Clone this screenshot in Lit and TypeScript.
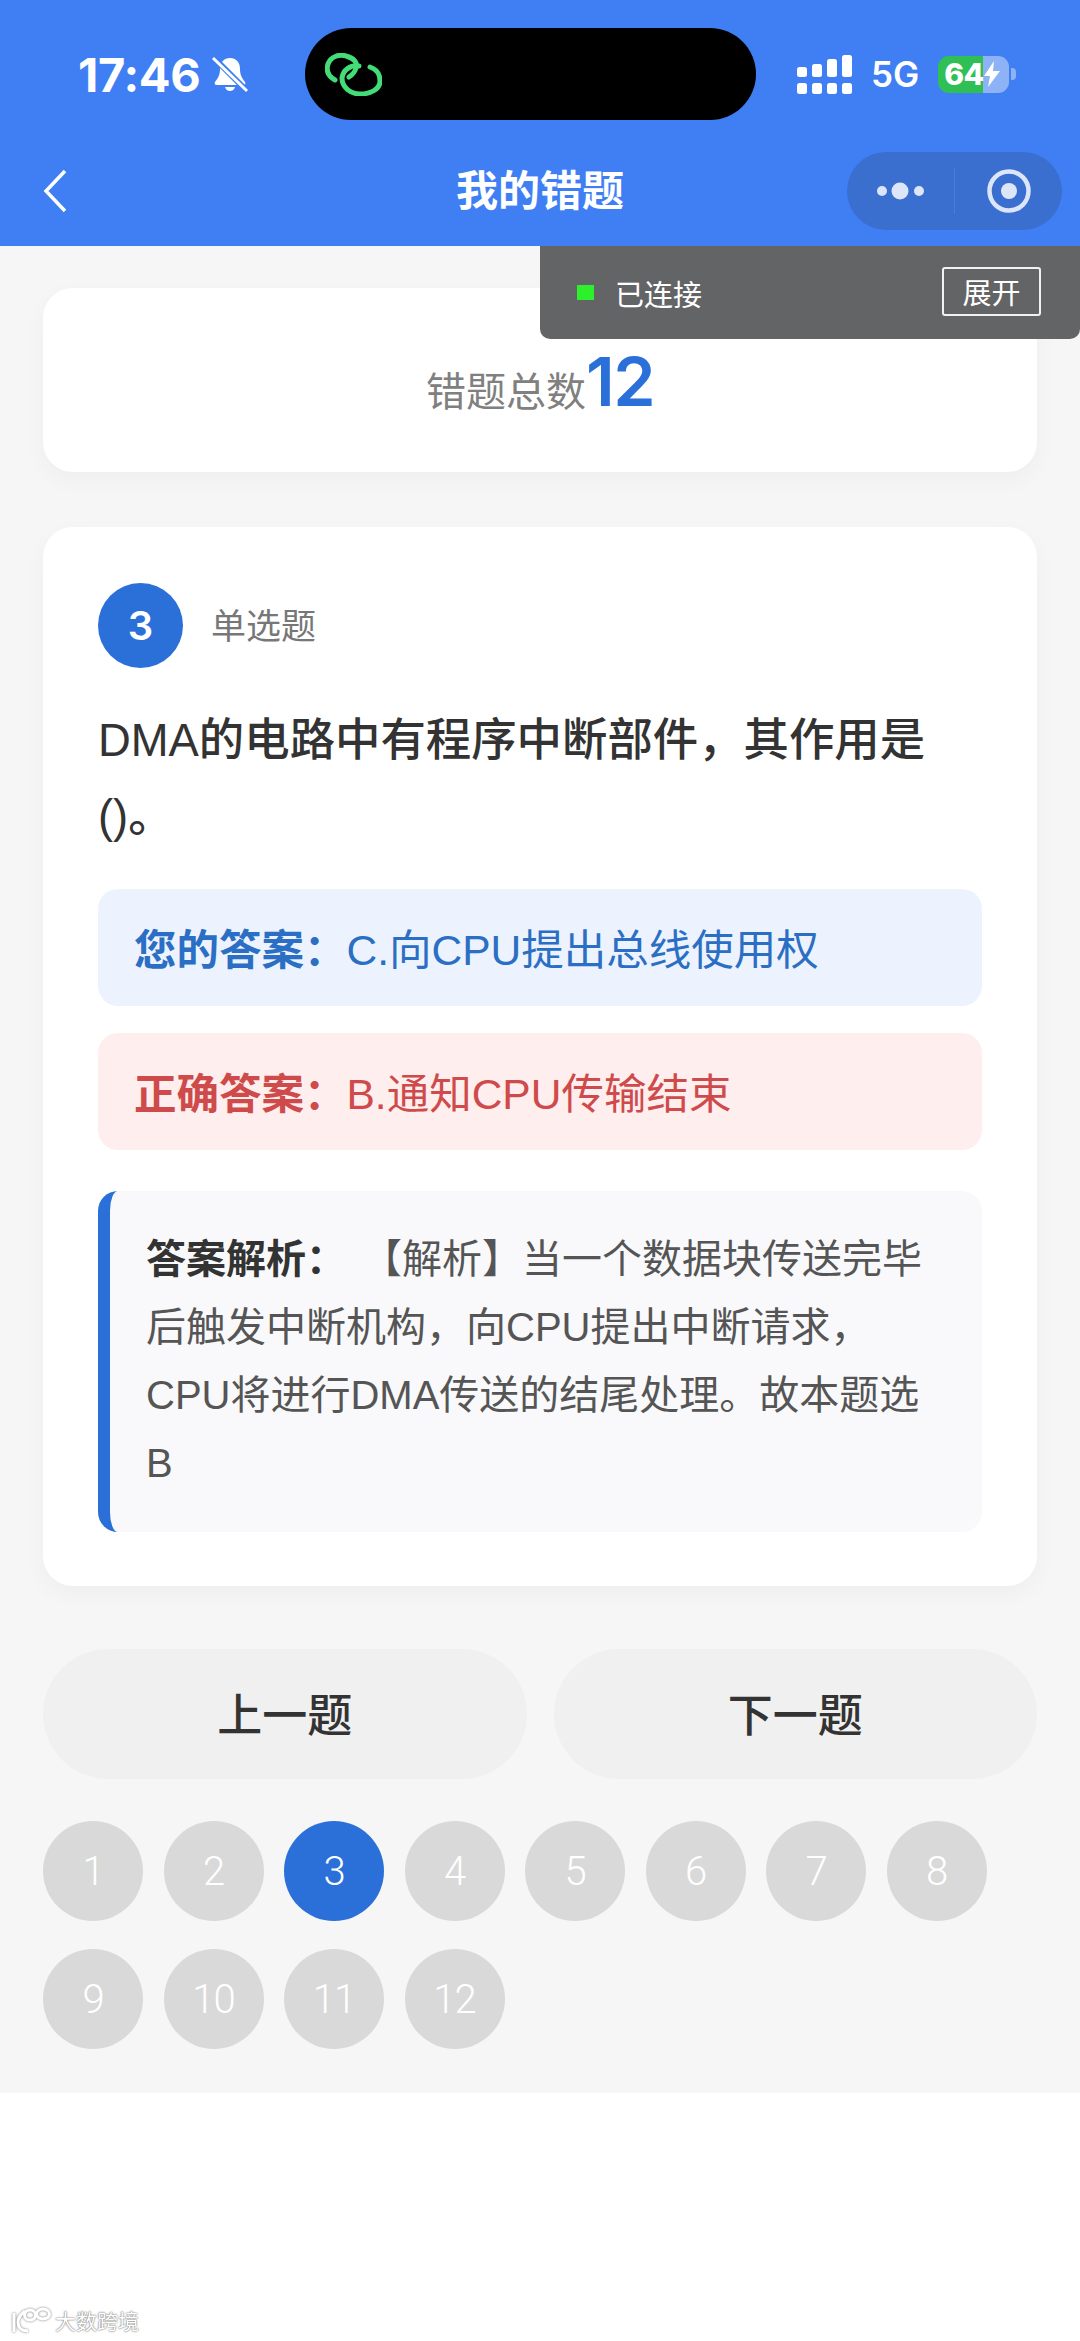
import { html, css, LitElement } from 'lit';
import { customElement, state } from 'lit/decorators.js';

@customElement('app-root')
export class AppRoot extends LitElement {
  static styles = css`
    :host {
      display: block;
      width: 1080px;
      height: 2341px;
      background: #fff;
      font-family: "Liberation Sans", "Noto Sans CJK SC", sans-serif;
      color: #333;
      position: relative;
      overflow: hidden;
    }

    .header {
      height: 246px;
      box-sizing: border-box;
      background: #3f7ff3;
      padding-top: 28px;
      color: #fff;
    }

    .status {
      display: grid;
      grid-template-columns: 305px 451px 1fr;
      height: 92px;
      align-items: center;
    }

    .status-left {
      display: flex;
      align-items: center;
      gap: 10px;
      padding-left: 78px;
    }

    .time {
      font-family: Inter, sans-serif;
      font-size: 47px;
      font-weight: 700;
      letter-spacing: -0.3px;
      line-height: 1;
    }

    .island {
      height: 92px;
      border-radius: 46px;
      background: #000;
      display: flex;
      align-items: center;
      padding-left: 20px;
    }

    .status-right {
      display: flex;
      align-items: center;
      padding-left: 41px;
    }

    .net {
      font-family: Inter, sans-serif;
      font-size: 35px;
      font-weight: 600;
      margin: 0 19px;
      line-height: 1;
    }

    .battery {
      width: 71px;
      height: 37px;
      border-radius: 11px;
      background: linear-gradient(90deg, #2fbf55 0 45px, #8db2f5 45px);
      display: flex;
      align-items: center;
      padding-left: 6px;
      box-sizing: border-box;
      font-family: Inter, sans-serif;
      font-size: 30px;
      font-weight: 800;
      line-height: 1;
      letter-spacing: -0.5px;
    }

    .battery-nub {
      width: 5px;
      height: 12px;
      border-radius: 0 4px 4px 0;
      background: #8db2f5;
      margin-left: 2px;
    }

    .nav {
      display: grid;
      grid-template-columns: 1fr auto 1fr;
      align-items: center;
      margin-top: 32px;
      height: 78px;
    }

    .back {
      padding-left: 43px;
      display: flex;
    }

    .title {
      font-size: 42px;
      font-weight: 700;
      line-height: 1;
      padding-top: 2px;
    }

    .capsule {
      justify-self: end;
      margin-right: 18px;
      width: 215px;
      height: 78px;
      border-radius: 39px;
      background: #3a6fd0;
      display: grid;
      grid-template-columns: 107px 1px 1fr;
      align-items: center;
      justify-items: center;
    }

    .capsule-line {
      width: 1px;
      height: 46px;
      background: #4a7cd8;
    }

    .panel {
      position: absolute;
      top: 246px;
      right: 0;
      width: 540px;
      height: 93px;
      box-sizing: border-box;
      background: #636466;
      border-radius: 0 0 10px 10px;
      display: flex;
      align-items: center;
      padding: 0 39px 0 37px;
      color: #fff;
      font-size: 29px;
      z-index: 2;
    }

    .panel-dot {
      width: 17px;
      height: 15px;
      background: #2cf02c;
      margin-right: 21px;
    }

    .panel-btn {
      margin-left: auto;
      width: 99px;
      height: 49px;
      box-sizing: border-box;
      border: 2px solid #f2f2f2;
      border-radius: 3px;
      display: flex;
      align-items: center;
      justify-content: center;
      font-size: 29px;
      margin-top: -3px;
    }

    .main {
      height: 1847px;
      box-sizing: border-box;
      background: #f6f6f6;
      padding: 42px 43px 0;
    }

    .card {
      background: #fff;
      border-radius: 30px;
      box-shadow: 0 8px 24px rgba(0, 0, 0, 0.035);
    }

    .total {
      height: 184px;
      display: flex;
      align-items: baseline;
      justify-content: center;
      line-height: 186px;
      font-size: 40px;
      color: #808080;
    }

    .total b {
      font-family: Inter, "Liberation Sans", sans-serif;
      font-size: 68px;
      font-weight: 600;
      color: #2b6fd8;
      letter-spacing: -1.5px;
    }

    .question {
      margin-top: 55px;
      padding: 56px 55px 54px;
    }

    .q-head {
      display: flex;
      align-items: center;
      gap: 28px;
      font-size: 35px;
      color: #777;
    }

    .q-head span {
      padding-bottom: 4px;
    }

    .badge {
      width: 85px;
      height: 85px;
      border-radius: 50%;
      background: #2b6fd8;
      color: #fff;
      display: flex;
      align-items: center;
      justify-content: center;
      font-family: Inter, sans-serif;
      font-size: 40px;
      font-weight: 600;
    }

    .q-text {
      margin-top: 35px;
      font-size: 45.4px;
      font-weight: 500;
      line-height: 76px;
      color: #333;
    }

    .answer {
      height: 117px;
      box-sizing: border-box;
      border-radius: 20px;
      display: flex;
      align-items: center;
      padding: 0 0 2px 36px;
      font-size: 42.5px;
    }

    .answer b {
      font-weight: 700;
    }

    .mine {
      margin-top: 34px;
      background: #edf3fe;
      color: #2b6fc4;
    }

    .right {
      margin-top: 27px;
      background: #feeeee;
      color: #cf4a4a;
    }

    .analysis {
      margin-top: 41px;
      border-left: 12px solid #2b6fd8;
      border-radius: 20px;
      background: #f9f9fb;
      padding: 34px 36px 35px;
      font-size: 40px;
      line-height: 68px;
      color: #555;
    }

    .analysis b {
      color: #333;
      font-weight: 700;
      margin-right: 36px;
    }

    .btns {
      display: grid;
      grid-template-columns: 1fr 1fr;
      gap: 27px;
      margin-top: 63px;
    }

    .btn {
      height: 130px;
      box-sizing: border-box;
      border-radius: 65px;
      background: #f0f0f0;
      display: flex;
      align-items: center;
      justify-content: center;
      padding-bottom: 4px;
      font-size: 45px;
      font-weight: 500;
      color: #333;
    }

    .pager {
      display: flex;
      flex-wrap: wrap;
      gap: 28px 20.5px;
      margin-top: 42px;
    }

    .page {
      width: 100px;
      height: 100px;
      border-radius: 50%;
      background: #d9d9d9;
      color: #fff;
      display: flex;
      align-items: center;
      justify-content: center;
      font-family: Roboto, sans-serif;
      font-size: 40px;
      font-weight: 300;
      letter-spacing: -1px;
    }

    .page.on {
      background: #2b6fd8;
    }

    .mark {
      position: absolute;
      left: 10px;
      bottom: 6px;
      display: flex;
      align-items: center;
      gap: 4px;
      color: #fff;
      font-size: 21px;
      text-shadow: 0 0 2px #777, 0 0 1px #777;
    }

    .mark svg {
      filter: drop-shadow(0 0 1px #777);
    }
  `;

  @state() current = 3;

  private pages = Array.from({ length: 12 }, (_, i) => i + 1);

  private bell() {
    return html`<svg width="38" height="38" viewBox="0 0 38 38">
      <path
        fill="#fff"
        d="M19 3c-6 0-10 4-10 11 0 6-2 9-5 13-1 2 0 3 2 3h26c2 0 3-1 2-3-3-4-5-7-5-13 0-7-4-11-10-11zM14 32c1 3 3 4 5 4s4-1 5-4z"
      />
      <path stroke="#3f7ff3" stroke-width="6" d="M3 3l32 32" />
      <path stroke="#fff" stroke-width="3" d="M2 3l34 33" />
    </svg>`;
  }

  private link() {
    return html`<svg
      width="57"
      height="43"
      viewBox="0 0 57 43"
      fill="none"
      stroke="#43dc78"
      stroke-width="5"
      stroke-linecap="round"
    >
      <path d="M10 27C3 23 1 17 3 11 6 3 15 1 21 3c8 2 12 7 10 12-1 4-4 7-7 9" />
      <path d="M34 13c-9-1-16 4-17 12 0 9 8 16 18 16 11 0 20-5 20-13 0-7-4-12-10-14" />
    </svg>`;
  }

  private signal() {
    return html`<svg width="55" height="39" viewBox="0 0 55 39" fill="#fff">
      <rect x="0" y="12" width="10" height="10" rx="2.5" />
      <rect x="15" y="9" width="10" height="13" rx="2.5" />
      <rect x="30" y="4" width="10" height="18" rx="2.5" />
      <rect x="45" y="0" width="10" height="22" rx="2.5" />
      <rect x="0" y="28" width="10" height="11" rx="2.5" />
      <rect x="15" y="28" width="10" height="11" rx="2.5" />
      <rect x="30" y="28" width="10" height="11" rx="2.5" />
      <rect x="45" y="28" width="10" height="11" rx="2.5" />
    </svg>`;
  }

  render() {
    return html`
      <div class="header">
        <div class="status">
          <div class="status-left">
            <span class="time">17:46</span>
            ${this.bell()}
          </div>
          <div class="island">${this.link()}</div>
          <div class="status-right">
            ${this.signal()}
            <span class="net">5G</span>
            <div class="battery">
              <span>64</span>
              <svg width="16" height="26" viewBox="0 0 16 26" fill="#fff">
                <path d="M10 0L0 15h6l-2 11L16 10H9z" />
              </svg>
            </div>
            <div class="battery-nub"></div>
          </div>
        </div>
        <div class="nav">
          <div class="back">
            <svg width="24" height="44" viewBox="0 0 24 44" fill="none" stroke="#fff" stroke-width="3.5">
              <path d="M22 2L3 22l19 20" />
            </svg>
          </div>
          <div class="title">我的错题</div>
          <div class="capsule">
            <svg width="50" height="20" viewBox="0 0 50 20" fill="#dde6f8">
              <circle cx="6" cy="10" r="5" />
              <circle cx="24" cy="10" r="8.5" />
              <circle cx="43" cy="10" r="5" />
            </svg>
            <div class="capsule-line"></div>
            <svg width="46" height="46" viewBox="0 0 46 46">
              <circle cx="23" cy="23" r="19.5" fill="none" stroke="#dde6f8" stroke-width="4.5" />
              <circle cx="23" cy="23" r="8" fill="#dde6f8" />
            </svg>
          </div>
        </div>
      </div>

      <div class="panel">
        <div class="panel-dot"></div>
        <span>已连接</span>
        <div class="panel-btn">展开</div>
      </div>

      <div class="main">
        <div class="card total"><span>错题总数</span><b>12</b></div>

        <div class="card question">
          <div class="q-head">
            <div class="badge">3</div>
            <span>单选题</span>
          </div>
          <div class="q-text">DMA的电路中有程序中断部件，其作用是<br />()。</div>
          <div class="answer mine"><b>您的答案：</b><span>C.向CPU提出总线使用权</span></div>
          <div class="answer right"><b>正确答案：</b><span>B.通知CPU传输结束</span></div>
          <div class="analysis">
            <b>答案解析：</b>【解析】当一个数据块传送完毕<br />后触发中断机构，向CPU提出中断请求，<br />CPU将进行DMA传送的结尾处理。故本题选<br />B
          </div>
        </div>

        <div class="btns">
          <div class="btn">上一题</div>
          <div class="btn">下一题</div>
        </div>

        <div class="pager">
          ${this.pages.map(
            (n) => html`<div class="page ${n === this.current ? 'on' : ''}">${n}</div>`,
          )}
        </div>
      </div>

      <div class="mark">
        <svg width="41" height="28" viewBox="0 0 41 28" fill="none" stroke="#fff" stroke-width="3">
          <path d="M4 7v19M15 5c-5 4-7 8-7 11 0 6 4 9 10 9" />
          <ellipse cx="20" cy="9" rx="5.5" ry="5" />
          <ellipse cx="33" cy="8" rx="6.5" ry="5" />
        </svg>
        <span>大数跨境</span>
      </div>
    `;
  }
}
